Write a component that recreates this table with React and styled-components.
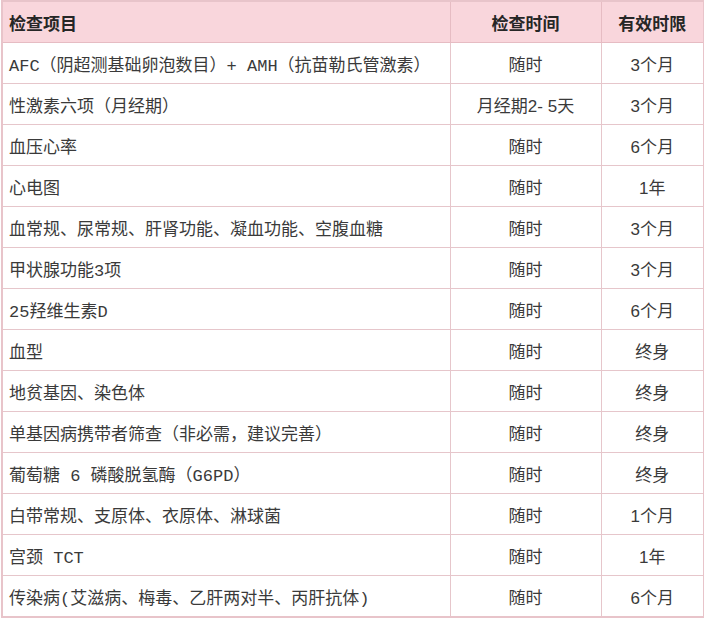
import React from 'react'
import styled, { createGlobalStyle } from 'styled-components'

const GlobalStyle = createGlobalStyle`
  html, body {
    margin: 0;
    padding: 0;
    background: #ffffff;
  }
`

const Wrap = styled.div`
  padding: 0 1px;
  width: 702px;
`

const Table = styled.table`
  width: 702px;
  border-collapse: collapse;
  table-layout: fixed;
  border: 2px solid #e8c4ca;
  font-family: "Liberation Mono", "Noto Sans CJK SC", monospace;
  font-size: 17px;
  color: #3a3a3a;
`

const HeadCell = styled.th`
  height: 40px;
  padding: 0 6px;
  background: #f9d6dc;
  border: 1px solid #e6bcc3;
  font-weight: 700;
  color: #262626;
  text-align: ${(p) => (p.$left ? 'left' : 'center')};
  font-family: "Noto Sans CJK SC", sans-serif;
`

const Cell = styled.td`
  height: 40px;
  padding: 0 6px;
  border: 1px solid #e6c6cb;
  text-align: ${(p) => (p.$left ? 'left' : 'center')};
  white-space: nowrap;
  font-family: ${(p) =>
    p.$left ? '"Liberation Mono", "Noto Sans CJK SC", monospace' : '"Liberation Sans", "Noto Sans CJK SC", sans-serif'};
`

const rows = [
  ['AFC（阴超测基础卵泡数目）+ AMH（抗苗勒氏管激素）', '随时', '3个月'],
  ['性激素六项（月经期）', '月经期2- 5天', '3个月'],
  ['血压心率', '随时', '6个月'],
  ['心电图', '随时', '1年'],
  ['血常规、尿常规、肝肾功能、凝血功能、空腹血糖', '随时', '3个月'],
  ['甲状腺功能3项', '随时', '3个月'],
  ['25羟维生素D', '随时', '6个月'],
  ['血型', '随时', '终身'],
  ['地贫基因、染色体', '随时', '终身'],
  ['单基因病携带者筛查（非必需，建议完善）', '随时', '终身'],
  ['葡萄糖 6 磷酸脱氢酶（G6PD）', '随时', '终身'],
  ['白带常规、支原体、衣原体、淋球菌', '随时', '1个月'],
  ['宫颈 TCT', '随时', '1年'],
  ['传染病(艾滋病、梅毒、乙肝两对半、丙肝抗体)', '随时', '6个月'],
]

export default function App() {
  return (
    <Wrap>
      <GlobalStyle />
      <Table>
        <colgroup>
          <col style={{ width: 448 }} />
          <col style={{ width: 151 }} />
          <col style={{ width: 103 }} />
        </colgroup>
        <thead>
          <tr>
            <HeadCell $left>检查项目</HeadCell>
            <HeadCell>检查时间</HeadCell>
            <HeadCell>有效时限</HeadCell>
          </tr>
        </thead>
        <tbody>
          {rows.map((r) => (
            <tr key={r[0]}>
              <Cell $left>{r[0]}</Cell>
              <Cell>{r[1]}</Cell>
              <Cell>{r[2]}</Cell>
            </tr>
          ))}
        </tbody>
      </Table>
    </Wrap>
  )
}
